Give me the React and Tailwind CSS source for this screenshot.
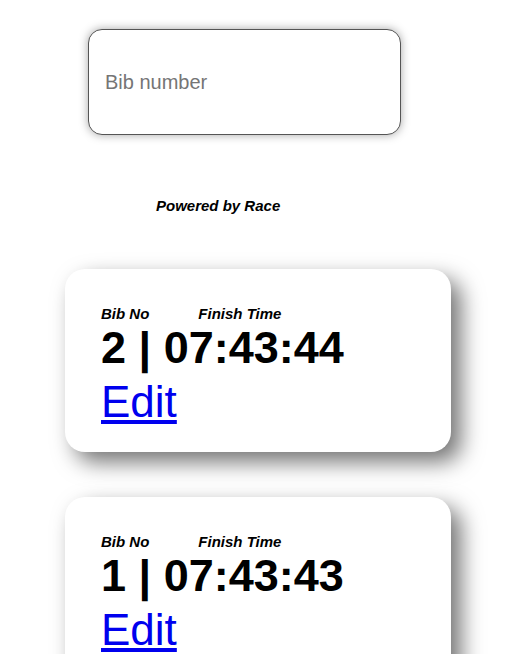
import { useState } from "react";

const results = [
  { bib: 2, time: "07:43:44" },
  { bib: 1, time: "07:43:43" },
];

export default function App() {
  const [bib, setBib] = useState("");

  return (
    <div className="h-screen bg-white text-black font-['Liberation_Sans',Arial,sans-serif] leading-[normal] overflow-hidden">
      <div className="pt-[29px] pl-[88px]">
        <input
          type="text"
          value={bib}
          onChange={(e) => setBib(e.target.value)}
          placeholder="Bib number"
          className="w-[313px] h-[106px] px-4 text-[20px] leading-[normal] bg-white border border-[#555] rounded-[14px] shadow-[0_0_10px_rgba(0,0,0,0.35)] outline-none placeholder:text-[#757575]"
        />
      </div>

      <p className="mt-[62px] pl-[156px] text-[15px] leading-[normal] font-bold italic">Powered by Race</p>

      <div className="mt-[55px] pl-[65px] flex flex-col gap-[45px]">
        {results.map((r) => (
          <div
            key={r.bib}
            className="w-[386px] shrink-0 bg-white rounded-[20px] pl-9 pt-9 pb-[25px] shadow-[10px_10px_22px_rgba(0,0,0,0.55)]"
          >
            <div className="text-[15px] leading-[normal] font-bold italic">
              <span>Bib No</span>
              <span className="ml-[49px]">Finish Time</span>
            </div>
            <div className="text-[45px] leading-[normal] font-bold">
              {r.bib} | {r.time}
            </div>
            <a href="#" className="block w-fit mt-[3px] text-[44px] leading-[normal] text-[#0000ee] underline">
              Edit
            </a>
          </div>
        ))}
      </div>
    </div>
  );
}
